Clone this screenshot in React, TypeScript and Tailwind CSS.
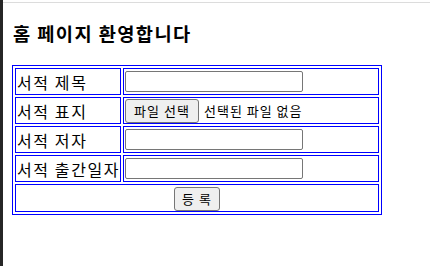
import React from "react";

export default function App() {
  const rows = ["서적 제목", "서적 표지", "서적 저자", "서적 출간일자"];
  return (
    <main className="flex h-[266px] w-[430px] bg-white font-['Noto_Sans_CJK_KR',sans-serif] text-black">
      <div className="h-full w-[3px] bg-[#262626]" />
      <div className="flex-1">
        <div className="mt-[2px] h-px bg-[#dcdcdc]" />
        <h3 className="ml-[10px] mt-[19px] text-[18.7px] font-bold leading-[22px] tracking-[1.4px]">
          홈 페이지 환영합니다
        </h3>
        <table className="ml-[9px] mt-[21px] w-[370px] table-fixed border border-solid border-[#0000ff] [border-collapse:separate] [border-spacing:2px]">
          <colgroup>
            <col className="w-[106px]" />
            <col />
          </colgroup>
          <tbody>
            {rows.map((label) => (
              <tr key={label}>
                <td className="h-[27px] overflow-visible whitespace-nowrap border border-solid border-[#0000ff] p-0 pl-px text-[16px] leading-[20px] tracking-[1.6px]">
                  {label}
                </td>
                <td className="h-[27px] border border-solid border-[#0000ff] p-0 pl-px">
                  {label === "서적 표지" ? (
                    <div className="flex items-center">
                      <button className="h-[24px] w-[74px] rounded-[3px] border border-[#767676] bg-[#efefef] text-[13px] leading-none tracking-[1px]">
                        파일 선택
                      </button>
                      <span className="ml-[5px] text-[13px] leading-none tracking-[1px]">선택된 파일 없음</span>
                    </div>
                  ) : (
                    <div className="h-[21px] w-[178px] rounded-[2px] border border-[#767676] bg-white" />
                  )}
                </td>
              </tr>
            ))}
            <tr>
              <td colSpan={2} className="h-[27px] border border-solid border-[#0000ff] p-0 text-center">
                <button className="inline-flex h-[24px] w-[46px] items-center justify-center rounded-[3px] border border-[#767676] bg-[#efefef] text-[13px] leading-none tracking-[1px]">
                  등 록
                </button>
              </td>
            </tr>
          </tbody>
        </table>
      </div>
    </main>
  );
}
